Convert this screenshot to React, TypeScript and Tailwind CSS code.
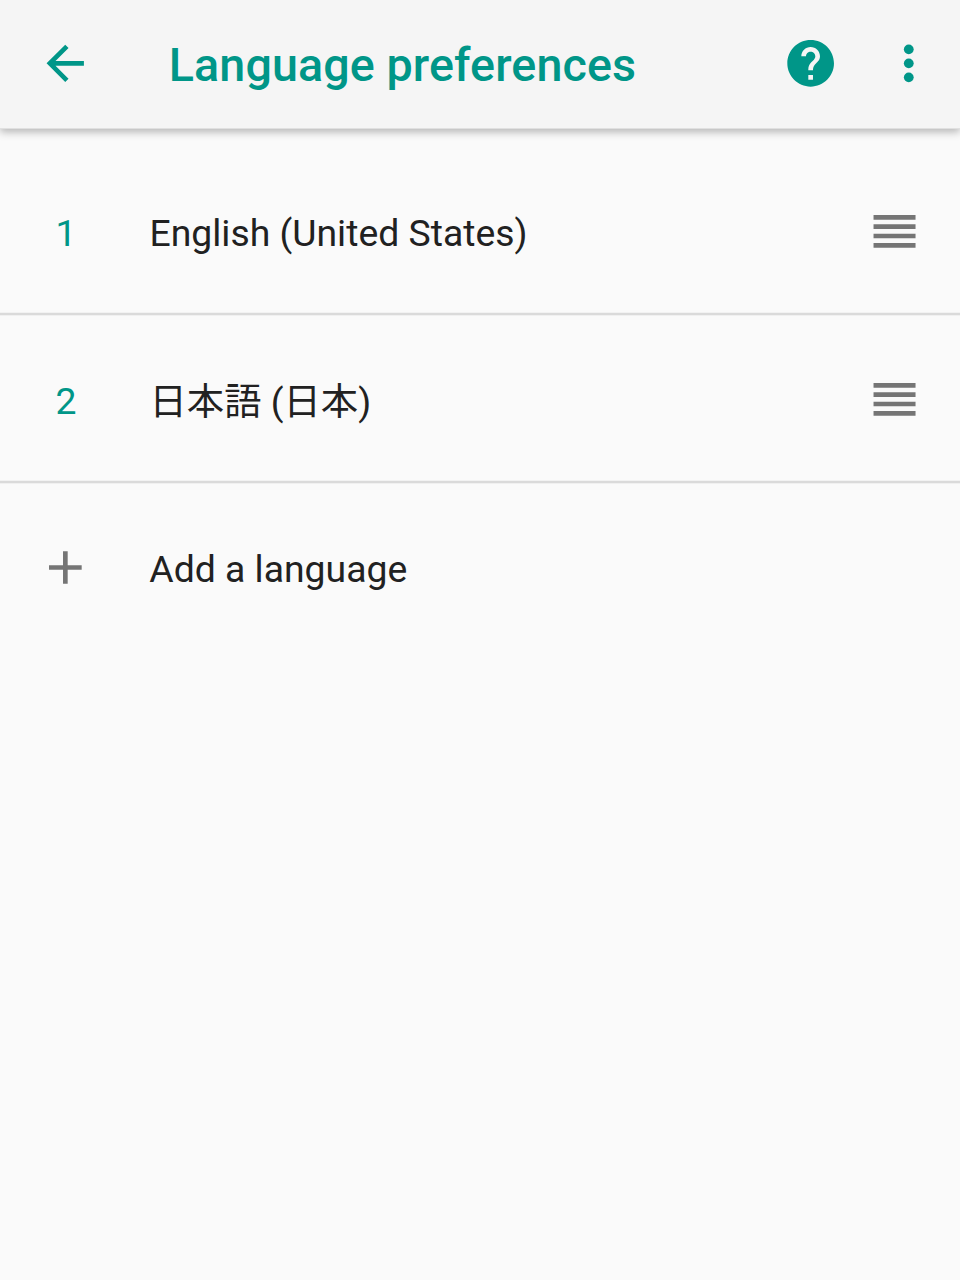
import React from 'react';

const languages = [
  { id: 1, label: 'English (United States)', offset: 'mt-1' },
  // CJK glyphs sit slightly higher in the line box
  { id: 2, label: '日本語 (日本)', offset: 'mt-1.5' },
];

const BackIcon = () => (
  <svg className="size-14 shrink-0" viewBox="-0.1 -0.15 24 24" fill="currentColor">
    <path d="M20 11H7.83l5.59-5.59L12 4l-8 8 8 8 1.41-1.41L7.83 13H20v-2z" />
  </svg>
);

const HelpIcon = () => (
  <svg className="size-14 shrink-0" viewBox="0.15 -0.15 24 24" fill="currentColor">
    <path d="M12 2C6.48 2 2 6.48 2 12s4.48 10 10 10 10-4.48 10-10S17.52 2 12 2zm1 17h-2v-2h2v2zm2.07-7.75l-.9.92C13.45 12.9 13 13.5 13 15h-2v-.5c0-1.1.45-2.1 1.17-2.83l1.24-1.26c.37-.36.59-.86.59-1.41 0-1.1-.9-2-2-2s-2 .9-2 2H8c0-2.21 1.79-4 4-4s4 1.79 4 4c0 .88-.36 1.68-.93 2.25z" />
  </svg>
);

const MoreIcon = () => (
  <svg className="size-14 shrink-0" viewBox="0.1 -0.15 24 24" fill="currentColor">
    <circle cx="12" cy="6" r="2.1" />
    <circle cx="12" cy="12" r="2.1" />
    <circle cx="12" cy="18" r="2.1" />
  </svg>
);

const AddIcon = () => (
  <svg className="size-14 shrink-0" viewBox="-0.15 0.2 24 24" fill="currentColor">
    <path d="M19 13h-6v6h-2v-6H5v-2h6V5h2v6h6v2z" />
  </svg>
);

const DragHandle = () => (
  <svg className="size-14 shrink-0" viewBox="0.2 0.3 24 24" fill="currentColor">
    <path d="M3 5h18v2H3zM3 9h18v2H3zM3 13h18v2H3zM3 17h18v2H3z" />
  </svg>
);

export default function App() {
  return (
    <div className="min-h-[1280px] bg-[#fafafa] font-['Roboto','Noto_Sans_CJK_JP',sans-serif] text-[#212121]">
      <header className="relative flex h-32 items-center bg-[#f5f5f5] pr-[23.5px] pb-0.5 pl-[37.33px] text-[#009688] shadow-[0_1px_0_#e0e0e0,0_4px_8px_rgba(0,0,0,0.28)]">
        <button aria-label="Back">
          <BackIcon />
        </button>
        <h1 className="mt-[5px] ml-[75.5px] flex-1 text-[46.67px] leading-none font-medium tracking-[0.09px] whitespace-nowrap">
          Language preferences
        </h1>
        <button aria-label="Help">
          <HelpIcon />
        </button>
        <button className="ml-[42px]" aria-label="More options">
          <MoreIcon />
        </button>
      </header>

      <main className="pt-[19px] text-[37.33px] leading-none">
        {languages.map((lang) => (
          <div
            key={lang.id}
            className="flex h-[168px] items-center border-b-2 border-[#dadada] pt-[3px] pr-[37.5px] pl-[55.5px] shadow-[0_1px_0_#f0f0f0,inset_0_-1px_0_#f2f2f2]"
          >
            <span className="mt-1 w-[94px] text-[#009688]">{lang.id}</span>
            <span className={`flex-1 ${lang.offset}`}>{lang.label}</span>
            <span className="text-[#757575]">
              <DragHandle />
            </span>
          </div>
        ))}
        <button className="flex h-[168px] w-full items-center pt-px pl-[37.33px] text-left">
          <span className="text-[#757575]">
            <AddIcon />
          </span>
          <span className="mt-1 ml-[56px]">Add a language</span>
        </button>
      </main>
    </div>
  );
}
